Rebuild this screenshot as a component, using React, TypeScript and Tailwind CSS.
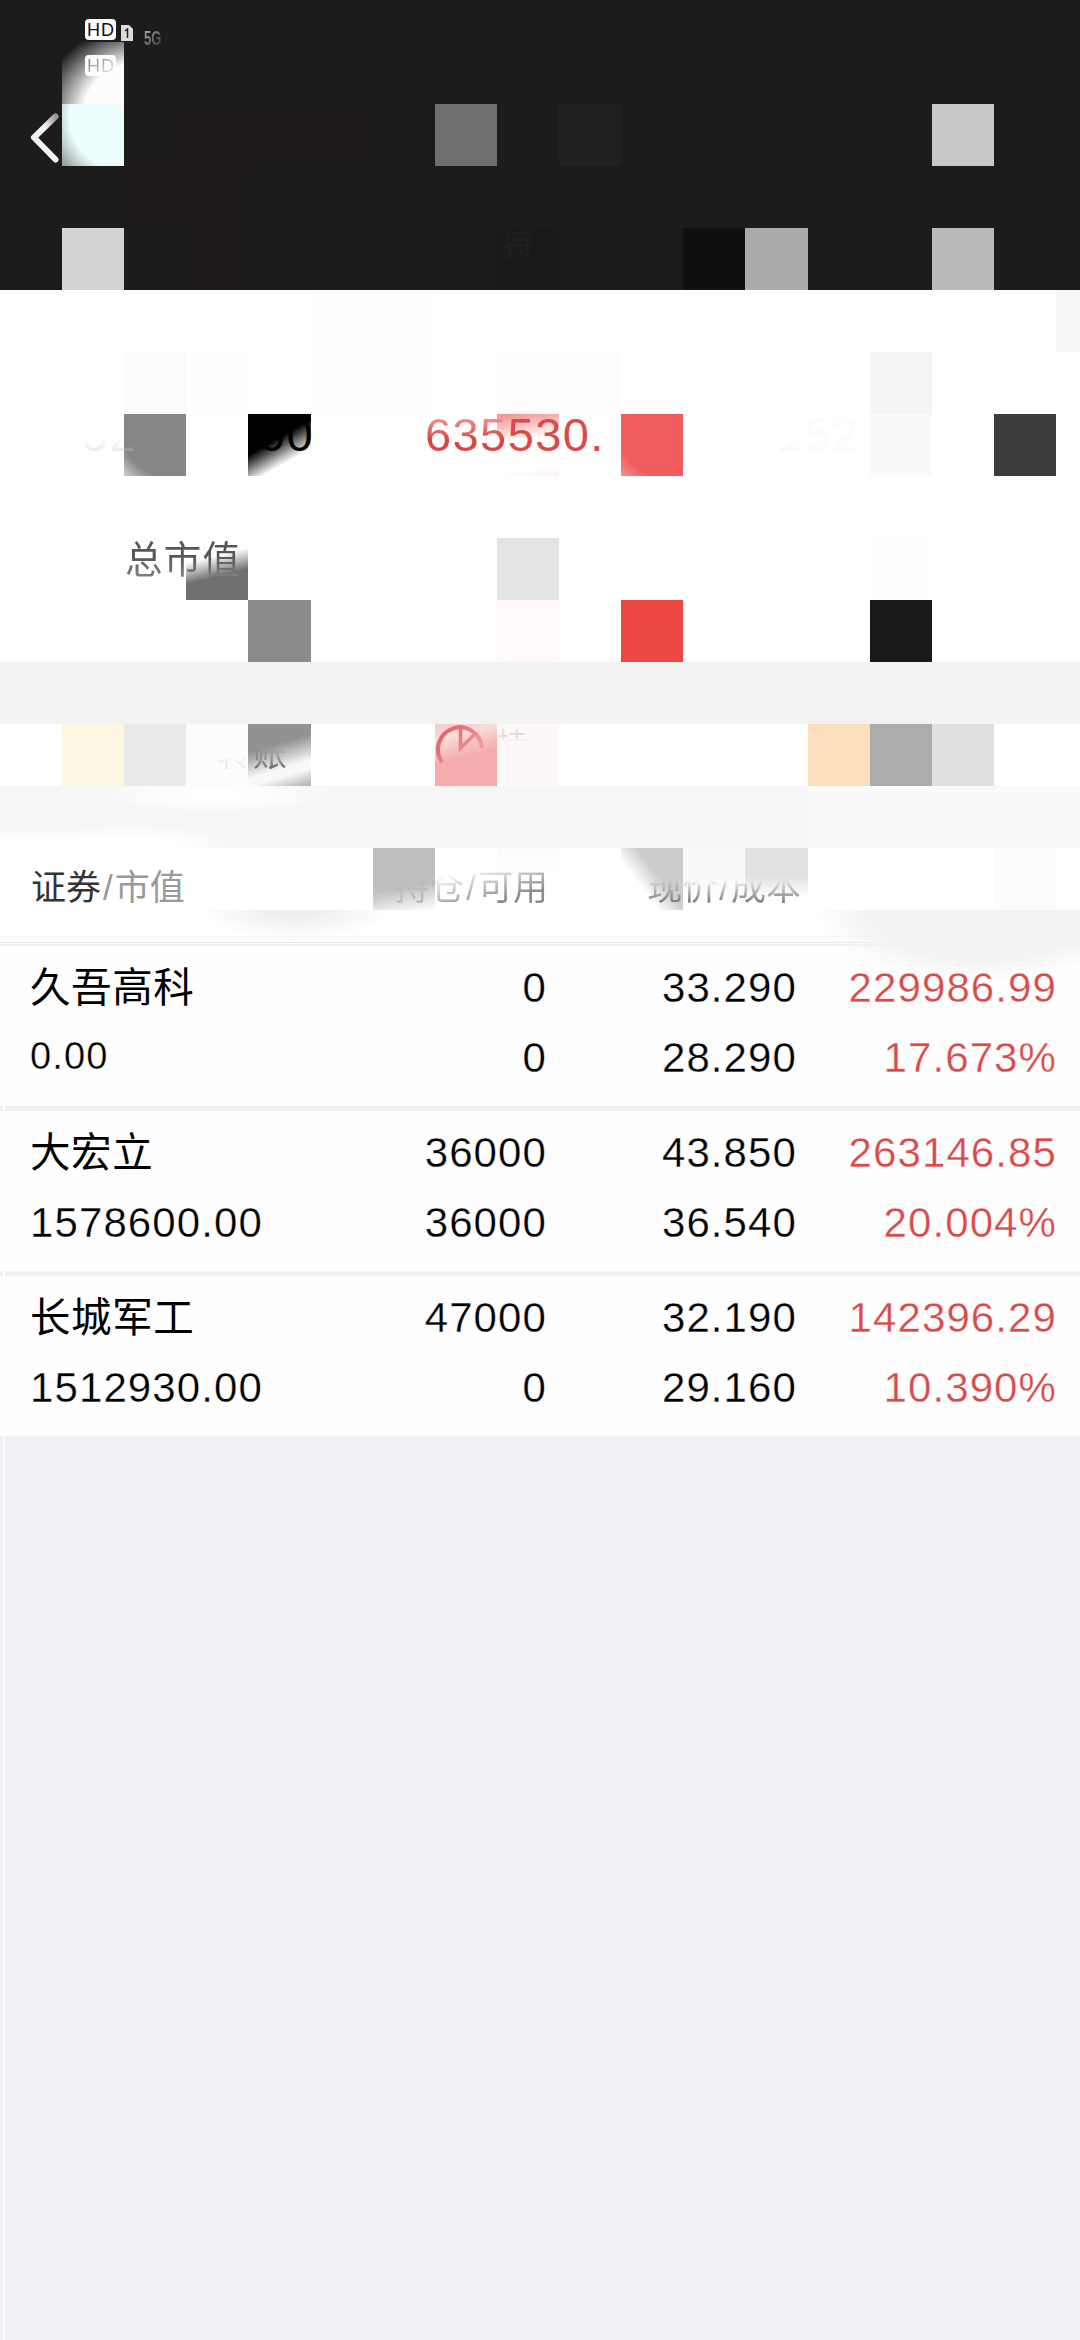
import React from 'react';
import clsx from 'clsx';

interface Holding {
  name: string;
  marketValue: string;
  position: string;
  available: string;
  price: string;
  cost: string;
  profit: string;
  profitRate: string;
  smallValue?: boolean;
}

const holdings: Holding[] = [
  {
    name: '久吾高科',
    marketValue: '0.00',
    position: '0',
    available: '0',
    price: '33.290',
    cost: '28.290',
    profit: '229986.99',
    profitRate: '17.673%',
    smallValue: true,
  },
  {
    name: '大宏立',
    marketValue: '1578600.00',
    position: '36000',
    available: '36000',
    price: '43.850',
    cost: '36.540',
    profit: '263146.85',
    profitRate: '20.004%',
  },
  {
    name: '长城军工',
    marketValue: '1512930.00',
    position: '47000',
    available: '0',
    price: '32.190',
    cost: '29.160',
    profit: '142396.29',
    profitRate: '10.390%',
  },
];

// Privacy mosaic: each entry is the grid placement and fill of one block
const headerCells = [
  'col-start-2 row-start-1 bg-[radial-gradient(ellipse_105px_90px_at_82px_72px,#fcfcfc_58%,rgba(252,252,252,0)_100%)]',
  'col-start-2 row-start-2 bg-[radial-gradient(circle_at_62px_12px,#eeffff_68%,#8b9696_100%)]',
  'col-start-3 row-start-2 bg-[#1d1c1a]',
  'col-start-4 col-span-3 row-start-2 bg-[#1f1a1b]',
  'col-start-8 row-start-2 bg-[#6e6e6e]',
  'col-start-10 row-start-2 bg-[#212121]',
  'col-start-16 row-start-2 bg-[#c9c9c9]',
  'col-start-3 col-span-2 row-start-3 bg-[#1f1a1b]',
  'col-start-7 row-start-3 bg-[#1b1d1c]',
  'col-start-2 row-start-4 bg-[#d3d3d3]',
  'col-start-4 row-start-4 bg-[#1f1a1b]',
  'col-start-7 col-span-2 row-start-4 bg-[#1b1d1c]',
  'col-start-9 row-start-4 bg-[#1a1a1a]',
  'col-start-12 row-start-4 bg-[#101010]',
  'col-start-13 row-start-4 bg-[#ababab]',
  'col-start-16 row-start-4 bg-[#bababa]',
];

const accountCells = [
  'col-start-18 row-start-1 bg-[#f7f7f7]',
  'col-start-6 col-span-2 row-start-1 row-span-2 bg-[#fdfffe]',
  'col-start-3 row-start-2 bg-[#fbfbfb]',
  'col-start-4 row-start-2 bg-[#fefefe]',
  'col-start-9 col-span-2 row-start-2 bg-[#fdfdfd]',
  'col-start-15 row-start-2 bg-[#f5f5f5]',
  'col-start-3 row-start-3 bg-[radial-gradient(circle_at_50px_10px,#868686_76%,#cfcfcf_100%)]',
  'col-start-5 row-start-3 bg-[linear-gradient(150deg,#000_42%,#fff_72%)]',
  'col-start-9 row-start-3 bg-[linear-gradient(172deg,#f48c8c_0%,#f9b5b5_16%,#fff_42%,#fff_85%,#fdeeee_100%)]',
  'col-start-11 row-start-3 bg-[radial-gradient(circle_at_50px_10px,#f05b5b_76%,#f49292_100%)]',
  'col-start-15 row-start-3 bg-[#fafafa]',
  'col-start-17 row-start-3 bg-[#3c3c3c]',
  'col-start-4 row-start-5 bg-[linear-gradient(166deg,#fff_32%,#707070_60%)]',
  'col-start-9 row-start-5 bg-[#e4e4e4]',
  'col-start-15 row-start-5 bg-[#fefefe]',
  'col-start-5 row-start-6 bg-[#8b8b8b]',
  'col-start-9 row-start-6 bg-[#fffaf9]',
  'col-start-11 row-start-6 bg-[#ed4744]',
  'col-start-15 row-start-6 bg-[#191919]',
];

const actionCells = [
  'col-start-2 bg-[#fff6e1]',
  'col-start-3 bg-[#eaeaea]',
  'col-start-4 bg-[#fcfcfc]',
  'col-start-5 bg-[linear-gradient(163deg,#929292_36%,#f8f8f8_68%,#f8f8f8_78%,#adadad_100%)]',
  'col-start-8 bg-[linear-gradient(165deg,#f7caca_0%,#f9dcdc_20%,#f4adac_52%)]',
  'col-start-9 bg-[#fdf8f8]',
  'col-start-14 bg-[#fcdebc]',
  'col-start-15 bg-[#acacac]',
  'col-start-16 bg-[#e0e0e0]',
];

const listHeadCells = [
  'col-start-7 bg-[linear-gradient(170deg,#bfbfbf_62%,#fff_100%)]',
  'col-start-9 bg-[linear-gradient(#fafafa,#fff_40%)]',
  'col-start-11 bg-[linear-gradient(52deg,#fff_34%,#cdcdcd_58%)]',
  'col-start-12 bg-[linear-gradient(#fafafa_60%,#fff)]',
  'col-start-13 bg-[linear-gradient(#e1e1e1_45%,#fff_80%)]',
  'col-start-17 bg-[#fcfcfc]',
];

export default function App() {
  return (
    <div className="relative flex h-[2340px] w-[1080px] flex-col overflow-hidden bg-[#f0f0f5] font-['Liberation_Sans','Noto_Sans_CJK_SC',sans-serif] text-black">
      <Header />
      <AccountSummary />
      <div className="h-[62px] shrink-0 bg-[#f3f3f3]" />
      <ActionBar />
      <div className="relative flex h-[62px] shrink-0 bg-[#f6f6f6]">
        <div className="ml-auto w-[272px] bg-[#fafafa]" />
        <div className="absolute inset-0 bg-[radial-gradient(ellipse_130px_18px_at_215px_9px,#fff_20%,transparent_100%),radial-gradient(ellipse_240px_24px_at_0px_68px,#fff_60%,transparent_100%),radial-gradient(ellipse_110px_24px_at_130px_62px,#fff_40%,transparent_100%)]" />
      </div>
      <HoldingsHeader />
      <div className="relative flex flex-col">
        <div className="flex flex-col gap-[5px]">
          {holdings.map((holding) => (
            <HoldingRow key={holding.name} holding={holding} />
          ))}
        </div>
        <div className="absolute top-[-36px] left-[770px] h-[80px] w-[310px] bg-[radial-gradient(ellipse_165px_72px_at_210px_0px,#f3f3f3_68%,rgba(243,243,243,0)_100%)]" />
        <div className="absolute inset-y-0 left-[3px] w-[2px] bg-[#fefefe]" />
      </div>
      <div className="ml-[3px] w-[2px] flex-1 bg-[#fbfbfd]" />
    </div>
  );
}

function Mosaic({ cells }: { cells: string[] }) {
  return (
    <div className="absolute inset-x-0 bottom-0 grid auto-rows-[62px] grid-cols-[repeat(4,62px)_63px_repeat(7,62px)_63px_repeat(4,62px)_24px]">
      {cells.map((cell) => (
        <div key={cell} className={cell} />
      ))}
    </div>
  );
}

function HdBadge({ faded }: { faded?: boolean }) {
  return (
    <span className="flex h-[21px] w-[31px] items-center justify-center rounded-[4px] bg-[#fdfdfd] text-[18px] leading-none tracking-[1px] text-[#111]">
      <span className={clsx('pl-px', faded && 'bg-linear-to-br from-[#777] to-[#fafafa] bg-clip-text text-transparent')}>HD</span>
    </span>
  );
}

function Header() {
  return (
    <header className="relative h-[290px] shrink-0 bg-[#1c1c1c]">
      <Mosaic cells={headerCells} />
      <div className="relative flex h-[104px] flex-col gap-[15px] pt-[19px] pl-[85px]">
        <div className="flex h-[21px] items-start">
          <HdBadge />
          <svg className="mt-[6px] ml-[5px]" width="12" height="16" viewBox="0 0 12 16">
            <path d="M0 0h8l4 4v12H0z" fill="#dcdcdc" />
            <path d="M4 6l2.5-2V13" fill="none" stroke="#222" strokeWidth="1.5" />
          </svg>
          <span className="mt-[10px] ml-[11px] h-[18px] origin-left scale-x-[0.62] bg-linear-to-br from-[#b4b4b4] to-[#333] bg-clip-text text-[21px] leading-[18px] font-bold text-transparent">
            5G
          </span>
        </div>
        <HdBadge faded />
      </div>
      <svg className="relative mt-[4px] ml-[26px]" width="36" height="60" viewBox="0 0 36 60" fill="none">
        <defs>
          <linearGradient id="back" x1="1" y1="0" x2="0.4" y2="0.6">
            <stop offset="0" stopColor="#999" />
            <stop offset="0.6" stopColor="#f2f2f2" />
          </linearGradient>
        </defs>
        <path d="M29.500 8.500L8 29.500l21.500 22" stroke="url(#back)" strokeWidth="6" strokeLinecap="round" strokeLinejoin="round" />
      </svg>
      <div className="relative mt-[60px] ml-[502px] h-[36px] text-[32px] leading-[32px] tracking-[2px] text-[#1f1f1f]">
        <span className="inline-block -rotate-6">持</span>
      </div>
    </header>
  );
}

function AccountSummary() {
  return (
    <section className="relative h-[372px] shrink-0 bg-white pt-[124px]">
      <Mosaic cells={accountCells} />
      <div className="relative flex h-[62px] text-[47px] leading-[42px] tracking-[1.400px]">
        <div className="w-[259px] pl-[82px]">
          <span className="bg-linear-to-b from-transparent from-55% to-[#c4c4c4]/60 bg-clip-text text-transparent">52</span>
        </div>
        <span className="w-[166px]">00</span>
        <span className="w-[352px] text-[#d94b4b]">
          <span className="bg-linear-to-b from-[#f3b3b3] to-[#d94444] to-60% bg-clip-text text-transparent">635</span>530.
        </span>
        <span className="bg-linear-to-b from-white from-40% to-[#e6e6e6] bg-clip-text text-transparent">1</span>
        <span className="text-[#fcfcfc]">52</span>
      </div>
      <div className="relative mt-[62px] ml-[125px] h-[62px] text-[37.500px] leading-[44px] tracking-[1.200px]">
        <span className="bg-linear-to-b from-[#555] from-40% to-[#888] bg-clip-text text-transparent">总市值</span>
      </div>
    </section>
  );
}

function ActionBar() {
  return (
    <section className="relative flex h-[62px] shrink-0 bg-white text-[34px] leading-[60px]">
      <Mosaic cells={actionCells} />
      <div className="relative ml-[217px] flex w-[218px]">
        <span className="w-[36px] bg-linear-to-b from-transparent from-50% to-[#dedede] to-80% bg-clip-text text-transparent">转</span>
        <span className="bg-linear-to-b from-transparent from-40% to-[#5a5a5a] to-75% bg-clip-text text-transparent">账</span>
      </div>
      <svg className="relative" width="62" height="62" viewBox="0 0 62 62" fill="none">
        <defs>
          <linearGradient id="pie" x1="0" y1="0" x2="50" y2="42" gradientUnits="userSpaceOnUse">
            <stop offset="0.200" stopColor="#e2666c" />
            <stop offset="0.950" stopColor="#f4adac" />
          </linearGradient>
        </defs>
        <path d="M7 38A22 22 0 1 1 47 24" stroke="url(#pie)" strokeWidth="4" />
        <path d="M25.500 1v23L41 9" stroke="url(#pie)" strokeWidth="3.500" />
      </svg>
      <span className="relative h-[62px] bg-linear-to-b from-[#e2dcde] from-[13px] to-transparent to-[17px] bg-clip-text text-[30px] leading-[40px] text-transparent">
        持
      </span>
    </section>
  );
}

function HoldingsHeader() {
  return (
    <div className="relative h-[98px] shrink-0 bg-white">
      <div className="relative h-[62px]">
        <Mosaic cells={listHeadCells} />
        <div className="relative flex pt-[10px] text-[35px] leading-[60px]">
          <div className="w-[361px] pl-[31px] text-[#999]">
            <span className="text-[#333]">证券</span>
            <Slash />
            市值
          </div>
          <div className="w-[187px] text-right">
            <span className="bg-linear-to-br from-transparent from-25% to-[#8c8c8c] to-75% bg-clip-text text-transparent">
              持仓
              <Slash />
              可用
            </span>
          </div>
          <div className="w-[253px] text-right">
            <span className="bg-linear-to-b from-transparent from-30% to-[#808080] to-85% bg-clip-text text-transparent">
              现价
              <Slash />
              成本
            </span>
          </div>
        </div>
      </div>
      <div className="absolute inset-x-0 bottom-0 flex flex-col">
        <div className="h-px bg-[#f6f6f6]" />
        <div className="mt-[5px] h-px bg-[#e6e6e8]" />
        <div className="mt-px h-[2px] bg-[#f0f0f4]" />
      </div>
      <div className="absolute top-[62px] left-[200px] h-[32px] w-[200px] bg-[radial-gradient(ellipse_95px_30px_at_95px_0px,#eee_20%,rgba(238,238,238,0)_100%)]" />
    </div>
  );
}

function Slash() {
  return <span className="mx-[2px]">/</span>;
}

function HoldingRow({ holding }: { holding: Holding }) {
  return (
    <div className="flex h-[160px] bg-[#fefefe] pt-[7px] text-[42px] leading-[70px] tracking-[1.100px] [-webkit-text-stroke:0.3px_#fefefe]">
      <div className="w-[345px] pl-[30px]">
        <div className="text-[40.500px] tracking-[0.600px] [-webkit-text-stroke:0]">{holding.name}</div>
        <div className={clsx(holding.smallValue && '-mt-[2px] text-[38px]')}>{holding.marketValue}</div>
      </div>
      <div className="w-[202px] text-right">
        <div>{holding.position}</div>
        <div>{holding.available}</div>
      </div>
      <div className="w-[250px] text-right">
        <div>{holding.price}</div>
        <div>{holding.cost}</div>
      </div>
      <div className="relative z-10 w-[260px] text-right text-[#d94b4b]">
        <div>{holding.profit}</div>
        <div>{holding.profitRate}</div>
      </div>
    </div>
  );
}
